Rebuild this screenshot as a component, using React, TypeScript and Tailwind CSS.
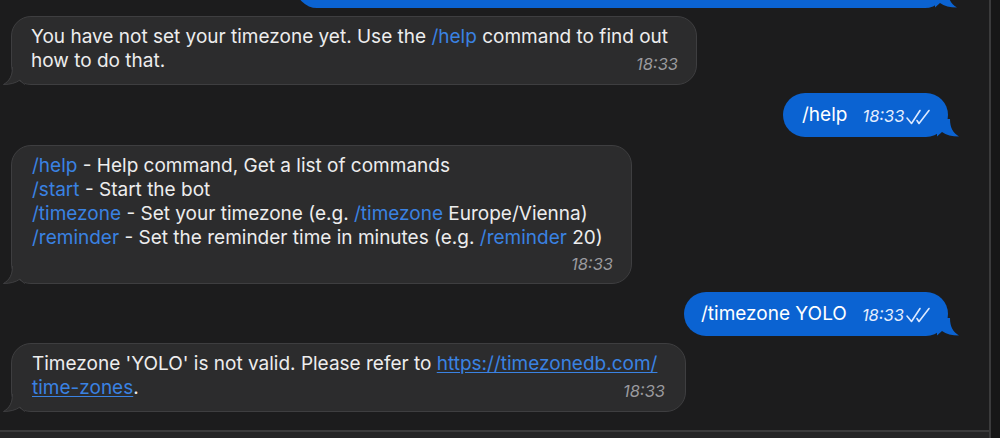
import React from 'react';

const BLUE = '#0b63d2';

function InTail() {
  return (
    <svg className="absolute -left-[9px] -bottom-px" width="22" height="18" viewBox="0 0 22 18">
      <path d="M9 0 C9 9 6 14 0 17.5 C7 17.5 13 16 17 13 L22 17.5 L22 0 Z" fill="#2c2c2d" />
      <path d="M9.5 0 C9.5 9 6.5 14 0.5 17.5 C7 17.5 13 16 17 13 C18 14.5 20 16.5 22 17.5" fill="none" stroke="#3e3e40" strokeWidth="1" />
    </svg>
  );
}

function OutTail() {
  return (
    <svg className="absolute -right-[11px] bottom-0" width="22" height="18" viewBox="0 0 22 18">
      <path d="M13 0 C13 9 16 14 22 17.5 C15 17.5 9 16 5 13 L0 17.5 L0 0 Z" fill={BLUE} />
    </svg>
  );
}

function Checks() {
  return (
    <svg width="28" height="18" viewBox="0 0 28 18" className="ml-[1px]">
      <path d="M2 10 L6.5 15.5 L15 2.5" fill="none" stroke="#dce9ff" strokeWidth="1.6" strokeLinecap="round" strokeLinejoin="round" />
      <path d="M12 12.5 L14 15.5 L24 2.5" fill="none" stroke="#dce9ff" strokeWidth="1.6" strokeLinecap="round" strokeLinejoin="round" />
    </svg>
  );
}

function Cmd({ children }: { children: React.ReactNode }) {
  return <span className="text-[#3a82e2]">{children}</span>;
}

function Time({ out }: { out?: boolean }) {
  return (
    <span className={`text-[16.5px] italic leading-none ${out ? 'text-[#e4eeff]' : 'text-[#9a9a9e]'}`}>18:33</span>
  );
}

function Incoming({ className, children }: { className: string; children: React.ReactNode }) {
  return (
    <div className={`relative ml-[11px] rounded-[20px] border border-[#3e3e40] bg-[#2c2c2d] ${className}`}>
      {children}
      <InTail />
    </div>
  );
}

function Outgoing({ text, className }: { text: string; className: string }) {
  return (
    <div className={`relative mr-[41px] flex h-[44px] items-center self-end rounded-[22px] bg-[#0b63d2] pl-[19px] ${className}`}>
      <span className="text-white">{text}</span>
      <span className="ml-[15px] mt-[3px] flex items-center">
        <Time out />
        <Checks />
      </span>
      <OutTail />
    </div>
  );
}

export default function App() {
  return (
    <div
      className="flex h-[438px] w-[1000px] overflow-hidden bg-[#1c1c1d] text-[19px] leading-[24px] text-[#ededed]"
      style={{ fontFamily: 'Inter, "Noto Sans", sans-serif' }}
    >
      <div className="flex w-[989px] flex-col">
        <div className="flex flex-1 flex-col overflow-hidden">
          {/* cut-off message at the top */}
          <div className="relative -mt-[34px] mr-[43px] h-[42px] w-[650px] shrink-0 self-end rounded-[22px] bg-[#0b63d2]">
            <OutTail />
          </div>

          <Incoming className="mt-[8px] w-[686px] pb-[11px] pl-[19px] pr-[18px] pt-[8px]">
            <div className="whitespace-nowrap">
              You have not set your timezone yet. Use the <Cmd>/help</Cmd> command to find out
            </div>
            <div className="flex items-end justify-between">
              <span>how to do that.</span>
              <span className="-mb-[3px]"><Time /></span>
            </div>
          </Incoming>

          <Outgoing text="/help" className="mt-[8px] w-[165px]" />

          <Incoming className="mt-[8px] w-[621px] pb-[10px] pl-[20px] pr-[18px] pt-[8px]">
            <div><Cmd>/help</Cmd> - Help command, Get a list of commands</div>
            <div><Cmd>/start</Cmd> - Start the bot</div>
            <div className="whitespace-nowrap"><Cmd>/timezone</Cmd> - Set your timezone (e.g. <Cmd>/timezone</Cmd> Europe/Vienna)</div>
            <div className="whitespace-nowrap"><Cmd>/reminder</Cmd> - Set the reminder time in minutes (e.g. <Cmd>/reminder</Cmd> 20)</div>
            <div className="mt-[6px] flex justify-end"><Time /></div>
          </Incoming>

          <Outgoing text="/timezone YOLO" className="mt-[8px] w-[264px] !pl-[17px]" />

          <Incoming className="mt-[7px] w-[675px] pb-[11px] pl-[20px] pr-[20px] pt-[8px]">
            <div className="whitespace-nowrap">
              Timezone 'YOLO' is not valid. Please refer to{' '}
              <span className="text-[#3a82e2] underline underline-offset-2">https://timezonedb.com/</span>
            </div>
            <div className="flex items-end justify-between">
              <span>
                <span className="text-[#3a82e2] underline underline-offset-2">time-zones</span>.
              </span>
              <span className="-mb-[3px]"><Time /></span>
            </div>
          </Incoming>
        </div>
        <div className="h-[8px] shrink-0 border-t-2 border-[#3b3b3c] bg-[#252526]" />
      </div>
      <div className="w-[11px] border-l-2 border-[#3b3b3c] bg-[#171717]" />
    </div>
  );
}
